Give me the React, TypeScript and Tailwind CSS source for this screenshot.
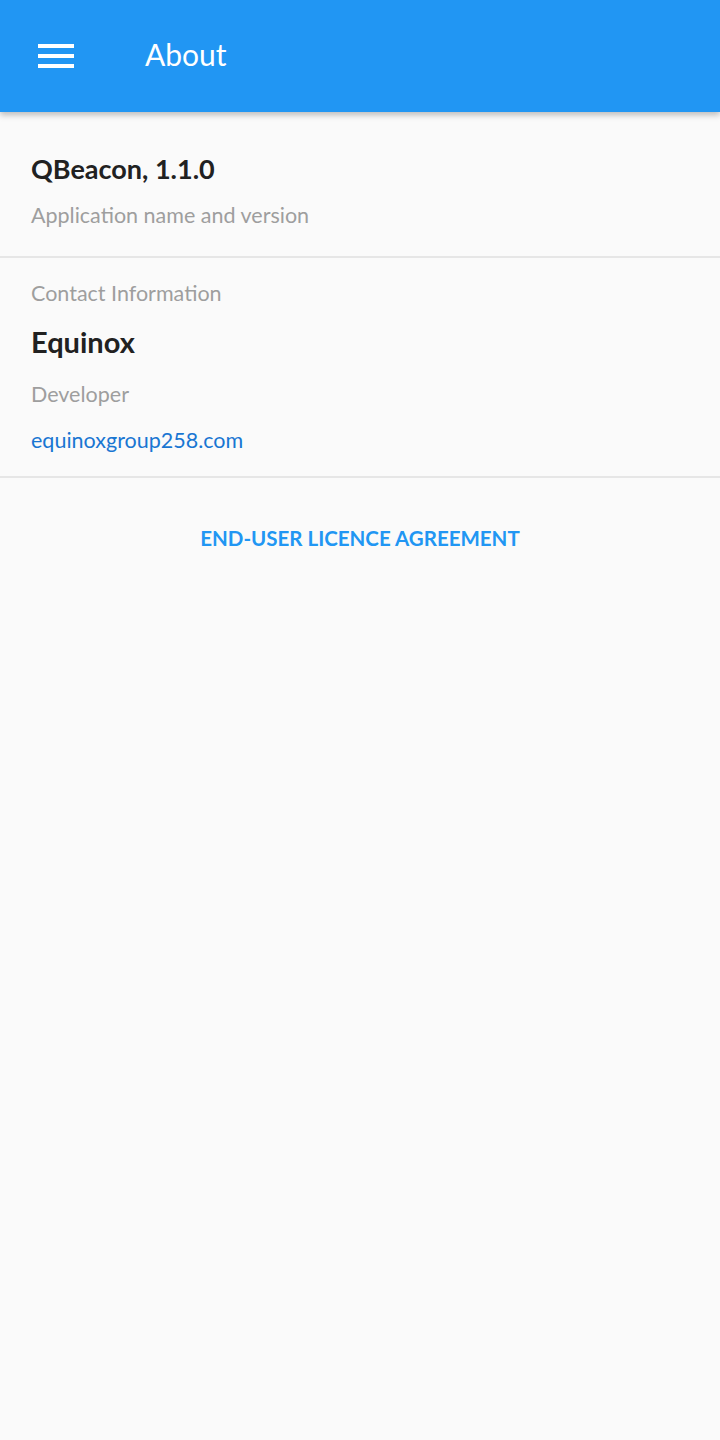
import React from "react";

export default function App() {
  return (
    <div className="min-h-[1440px] w-[720px] bg-[#fafafa]" style={{ fontFamily: "Lato, 'Noto Sans', sans-serif" }}>
      <header className="relative z-10 flex h-[112px] items-center bg-[#2196f3] shadow-[0_3px_6px_rgba(0,0,0,0.25)]">
        <div className="ml-[38px] flex w-[36px] flex-col gap-[6px]">
          <span className="block h-[4px] bg-white" />
          <span className="block h-[4px] bg-white" />
          <span className="block h-[4px] bg-white" />
        </div>
        <h1 className="mb-[5px] ml-[71px] text-[30px] font-normal leading-none text-white">About</h1>
      </header>

      <section className="border-b-2 border-[#e6e6e6] px-[31px] pb-[28px] pt-[39px]">
        <div className="text-[27px] font-bold leading-[36px] text-[#212121]">QBeacon, 1.1.0</div>
        <div className="mt-[15px] text-[21.5px] leading-[26px] text-[#9e9e9e]">Application name and version</div>
      </section>

      <section className="border-b-2 border-[#e6e6e6] px-[31px] pb-[24px] pt-[22px]">
        <div className="text-[21.5px] leading-[26px] text-[#9e9e9e]">Contact Information</div>
        <div className="mt-[17px] text-[29px] font-bold leading-[38px] text-[#212121]">Equinox</div>
        <div className="mt-[20px] text-[21.5px] leading-[26px] text-[#9e9e9e]">Developer</div>
        <div className="mt-[21px] text-[21.5px] leading-[24px] text-[#1976d2]">equinoxgroup258.com</div>
      </section>

      <div className="flex justify-center pt-[46px]">
        <button className="text-[20.5px] font-bold uppercase leading-[28px] text-[#2196f3]">
          End-User Licence Agreement
        </button>
      </div>
    </div>
  );
}
